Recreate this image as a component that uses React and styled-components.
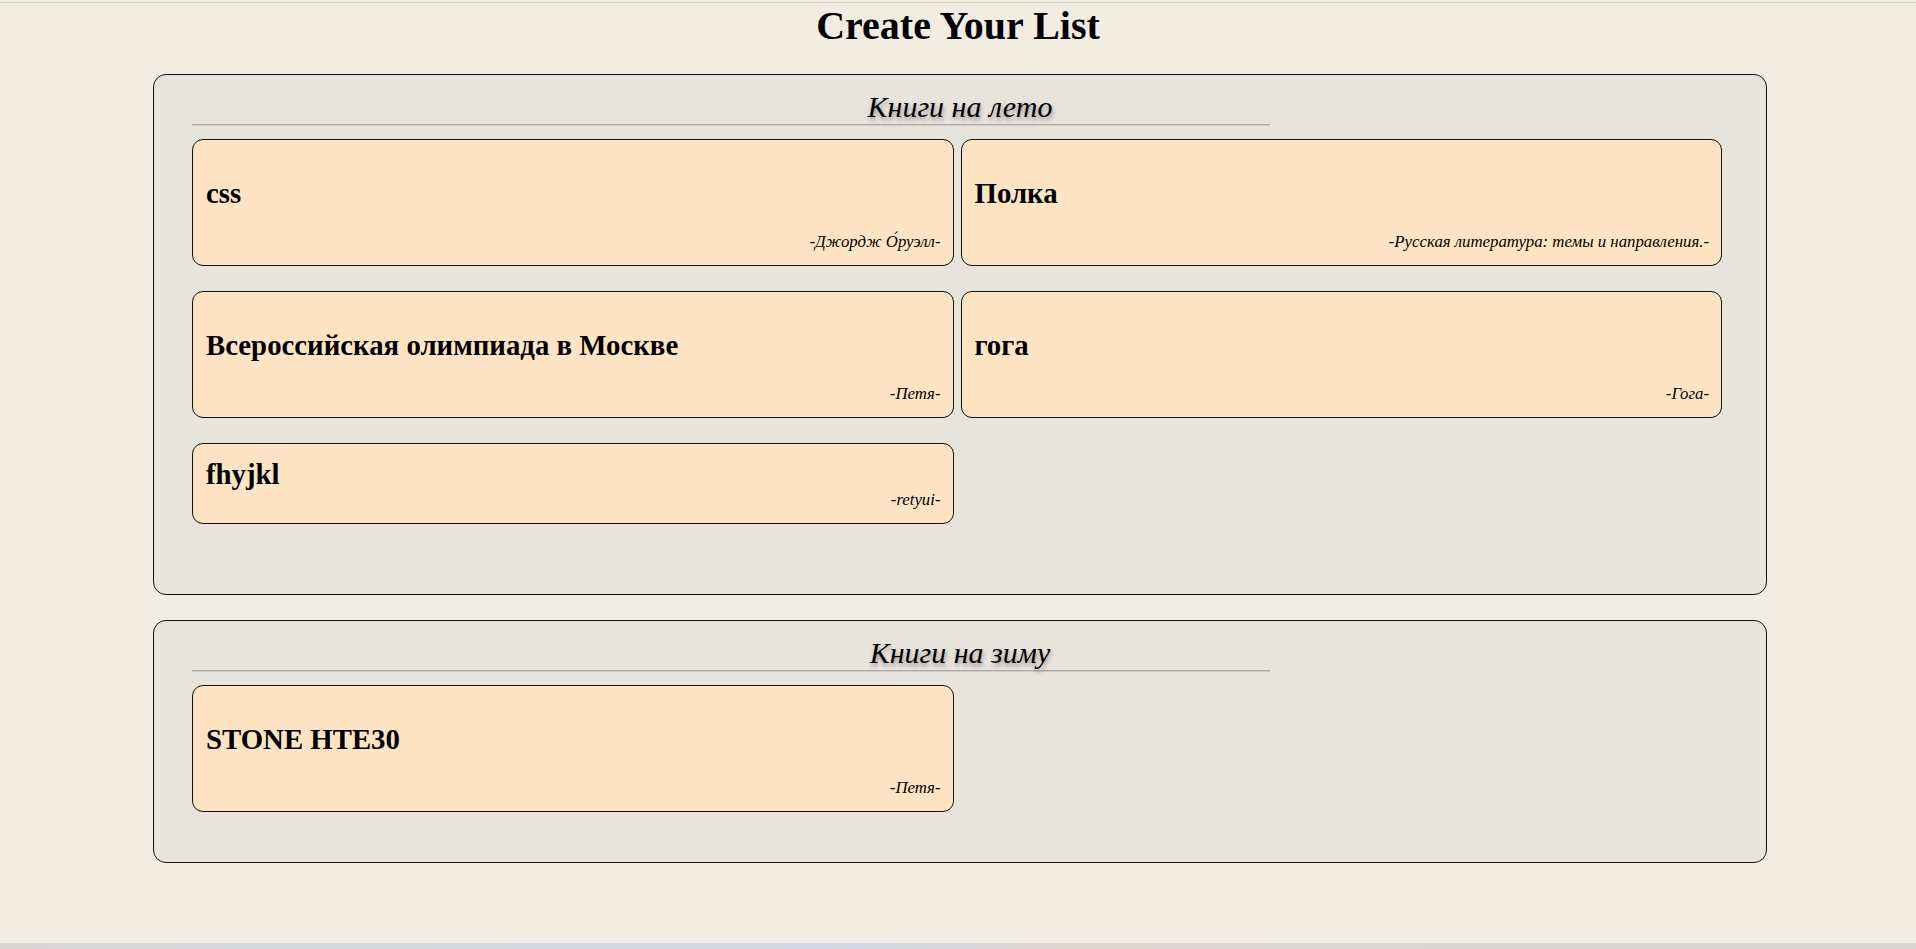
import React from "react";
import styled, { createGlobalStyle } from "styled-components";

const Global = createGlobalStyle`
  html, body { margin: 0; padding: 0; }
  body {
    background: #f1ede1;
    font-family: "Liberation Serif", "Times New Roman", serif;
    color: #000;
  }
`;

const Page = styled.div`
  min-height: 100vh;
  display: flex;
  flex-direction: column;
  padding-top: 2px;
  box-sizing: border-box;
`;

const TopRule = styled.div`
  height: 1px;
  background: #d3d3c4;
`;

const Title = styled.h1`
  margin: 3px 0 28px;
  font-size: 40px;
  line-height: 40px;
  font-weight: bold;
  text-align: center;
`;

const Panel = styled.section`
  margin: 0 149px ${(p) => (p.$last ? 0 : 25)}px 153px;
  background: #e7e4dc;
  border: 1px solid #111;
  border-radius: 13px;
  padding: 15px 0 ${(p) => p.$tail}px;
`;

const PanelHeading = styled.h2`
  margin: 0;
  font-size: 30px;
  line-height: 34px;
  font-weight: normal;
  font-style: italic;
  text-align: center;
  text-shadow: 1px 3px 4px rgba(0, 0, 0, 0.35);
`;

const Divider = styled.div`
  margin-left: 38px;
  width: 1078px;
  border-top: 1px solid #aeaca6;
  border-bottom: 1px solid #cfccc5;
`;

const Grid = styled.div`
  margin: 13px 44px 0 38px;
  display: grid;
  grid-template-columns: 1fr 1fr;
  column-gap: 7px;
  row-gap: 25px;
  align-items: start;
`;

const Card = styled.article`
  background: #ffe4c4;
  border: 1px solid #111;
  border-radius: 11px;
  padding: 14px 12px 14px 13px;
`;

const CardTitle = styled.h3`
  margin: ${(p) => (p.$compact ? "0" : "23px 0")};
  font-size: 28.8px;
  line-height: 32px;
  font-weight: bold;
`;

const Author = styled.p`
  margin: 0;
  font-size: 16.8px;
  line-height: 19px;
  font-style: italic;
  text-align: right;
`;

const Strip = styled.div`
  margin-top: auto;
  height: 6px;
  background: linear-gradient(90deg, #d9d7d5 0%, #d3d8e3 30%, #d4d9e5 45%, #ddd6d2 55%, #d9d7d6 75%, #d8d7d6 100%);
`;

const lists = [
  {
    name: "Книги на лето",
    tail: 70,
    books: [
      { title: "css", author: "Джордж О́руэлл" },
      { title: "Полка", author: "Русская литература: темы и направления." },
      { title: "Всероссийская олимпиада в Москве", author: "Петя" },
      { title: "гога", author: "Гога" },
      { title: "fhyjkl", author: "retyui", compact: true },
    ],
  },
  {
    name: "Книги на зиму",
    tail: 50,
    books: [{ title: "STONE HTE30", author: "Петя" }],
  },
];

export default function App() {
  return (
    <>
      <Global />
      <Page>
        <TopRule />
        <Title>Create Your List</Title>
        {lists.map((list, i) => (
          <Panel key={list.name} $tail={list.tail} $last={i === lists.length - 1}>
            <PanelHeading>{list.name}</PanelHeading>
            <Divider />
            <Grid>
              {list.books.map((b) => (
                <Card key={b.title}>
                  <CardTitle $compact={b.compact}>{b.title}</CardTitle>
                  <Author>-{b.author}-</Author>
                </Card>
              ))}
            </Grid>
          </Panel>
        ))}
        <Strip />
      </Page>
    </>
  );
}
